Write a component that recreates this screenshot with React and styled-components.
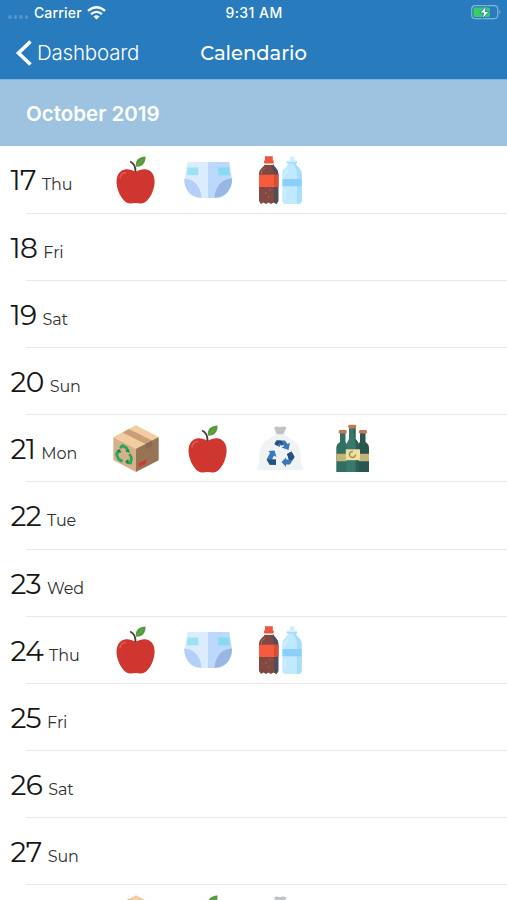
import styled, { createGlobalStyle } from "styled-components";

const days = [
  { number: 17, name: "Thu", icons: ["organic", "diapers", "plastic"] },
  { number: 18, name: "Fri", icons: [] },
  { number: 19, name: "Sat", icons: [] },
  { number: 20, name: "Sun", icons: [] },
  { number: 21, name: "Mon", icons: ["paper", "organic", "residual", "glass"] },
  { number: 22, name: "Tue", icons: [] },
  { number: 23, name: "Wed", icons: [] },
  { number: 24, name: "Thu", icons: ["organic", "diapers", "plastic"] },
  { number: 25, name: "Fri", icons: [] },
  { number: 26, name: "Sat", icons: [] },
  { number: 27, name: "Sun", icons: [] },
  { number: 28, name: "Mon", icons: ["paper", "organic", "residual"] },
];

const Apple = () => (
  <Icon viewBox="0.400 0 48 48">
    <path d="M24 16C19 13 14 12.200 10 14.800C3.500 19 4 29 7.500 37C10 43 15 48 19 47.500C22 46.800 26 46.800 29 47.500C33 48 38 43 40.500 37C44 29 44.500 19 38 14.800C34 12.200 29 13 24 16Z" fill="#d03630" />
    <path d="M8.500 22C9 18.500 11 16.800 14 16.500" fill="none" stroke="#e0584e" strokeWidth="1.600" strokeLinecap="round" />
    <path d="M18.500 5.500C22 7 24 11 24 16" fill="none" stroke="#493b3a" strokeWidth="1.900" />
    <path d="M24.500 10.800C23 4 28 0.500 34 0.500C34 7 31 11 24.500 10.800Z" fill="#579a3b" />
    <path d="M25 10L31 3.500" stroke="#79b657" strokeWidth="0.700" />
  </Icon>
);

const Diaper = () => (
  <Icon viewBox="0 0 48 48">
    <path d="M3.500 6H24V42H16C7 42 0.300 34 0.300 24Z" fill="#dcecff" />
    <path d="M24 6H45.300L48 24C48 34 41 42 32 42H24Z" fill="#bcd8fb" />
    <path d="M0.300 22.500C10 22.500 17 31 17.500 41.700C7 41.500 0 33.500 0.300 22.500Z" fill="#b4cff8" />
    <path d="M48 22.500C38 22.500 31 31 30.500 41.700C41 41.500 48.300 33.500 48 22.500Z" fill="#98b7e3" />
    <path d="M3.500 11.500H14.300V19.300H2.800Z" fill="#9be3f2" />
    <path d="M34.300 11.500H45L45.700 19.300H34.300Z" fill="#85dbf0" />
  </Icon>
);

const PlasticBottles = () => (
  <Icon viewBox="0 0 48 48">
    <path d="M9 7H17C17 11 22.300 12 22.300 18V45L20.500 48L17.500 46.500L15 48L12.500 46.500L10 48L7.500 46.500L5 48L3 45V18C3 12 9 11 9 7Z" fill="#824942" />
    <path d="M17 7C17 11 22.300 12 22.300 18V45L20.500 48L18 46V18C18 12 14.500 10 14.500 7Z" fill="#504c59" />
    <path d="M3 18.700H22.300V31H3Z" fill="#f65b3d" />
    <path d="M18 18.700H22.300V31H18Z" fill="#d84b35" />
    <path d="M9 0.300H16.800V4.500H17.700V7H8V4.500H9Z" fill="#ef573c" />
    <path d="M8.500 7.300H17.200V9H8.500Z" fill="#f6e0d6" />
    <path d="M5.500 18V16C5.500 14 8 13 9 12M9 37H11M13 34H14.500M12 41H13.500" fill="none" stroke="#a56e62" strokeWidth="1" />
    <path d="M32 7H40C40 11 45.700 12 45.700 18V22L44.700 23V30L45.700 31.500V44Q45.700 48 42 48H30Q26.300 48 26.300 44V31.500L27.300 30V23L26.300 22V18C26.300 12 32 11 32 7Z" fill="#c0e9ff" />
    <path d="M40 7C40 11 45.700 12 45.700 18V44Q45.700 48 42 48H41V18C41 12 37.500 10 37.500 7Z" fill="#a6ddfb" />
    <path d="M26.300 23H45.700V30.300H26.300Z" fill="#8bd0fb" />
    <path d="M34 0.500H38.500V4.500H41V7H30.500V4.500H34Z" fill="#cfeeff" />
    <path d="M30.500 6.700H41" stroke="#9bd8fa" strokeWidth="1" />
    <path d="M29 20V17L32 14M29 33V43" fill="none" stroke="#d8f2ff" strokeWidth="1.200" />
  </Icon>
);

const CardboardBox = () => (
  <Icon viewBox="0 0 48 48">
    <path d="M24 0.300L46.700 12L24 23.700L1.300 12.300Z" fill="#f3cda0" />
    <path d="M17 3.900L40 15.500L33.500 19L10.500 7.500Z" fill="#c99f78" />
    <path d="M1.300 12.300L24 23.700V47L1.300 35Z" fill="#d6b08a" />
    <path d="M24 23.700L46.700 12V35.300L24 47Z" fill="#987457" />
    <path d="M33.500 19L40 15.500V21L33.500 24.500Z" fill="#8b6a51" />
    <g fill="none" stroke="#26a85a" strokeWidth="2.700">
      <path d="M8 23L10.500 20.500L14.500 23L16 27" />
      <path d="M7.500 25.500L4.500 29L6.500 34L10.500 36.500" />
      <path d="M17.500 29L19.500 33L18.500 38L14 37" />
    </g>
    <path d="M13.500 26L18 28L16.500 24ZM4 26L8 24L9 28ZM16.500 34L13 36.500L16.500 39.500Z" fill="#15884a" />
    <path d="M27 38L31 36V40L27 42ZM31.500 35.500L35 34L33.500 39L30 40.500Z" fill="#cf3935" />
  </Icon>
);

const TrashBag = () => (
  <Icon viewBox="0 0 48 48">
    <path d="M20 8.500H28C30 12 40 15 43 22C46 29 43 37 47.300 43Q48 45.500 45 45.300H3Q0.500 45.300 1.500 42C5 36 2 29 5 22C8 15 18 12 20 8.500Z" fill="#f0f3f4" />
    <path d="M18 2.500Q21 0.800 24 2.200Q27 0.800 30.500 2.500L27.500 8.700Q24 10 20.500 8.700Z" fill="#c0c3c5" />
    <path d="M20.500 15.500H29L31.500 19L34 17.700L32.500 25L25.500 22.500L28 21L26 18L23.500 22L18.500 19Z" fill="#3b78b7" />
    <path d="M20.500 15.500H25L27.500 19L26 21L23.500 17.500L21.500 21L18.500 19Z" fill="#24517f" />
    <path d="M12.500 26L18.500 25.500L20.500 32L18 30.500L16 34.500H20V39.700H13.500L10.500 34.500L14 28Z" fill="#3b78b7" />
    <path d="M12 34.500H20V39.700H14L11 35Z" fill="#24517f" />
    <path d="M31 29L35.500 26.500L38.500 32L34 39.500H30V42L25.500 37L30 32.500V34.500H33Z" fill="#3b78b7" />
    <path d="M31 29L35.500 26.500L38.500 32L36.500 35H33Z" fill="#24517f" />
  </Icon>
);

const GlassBottles = () => (
  <Icon viewBox="0 0 48 48">
    <path d="M12 8H17.500V17Q20 20 20 23V47H8.300V23Q8.300 19 12 17Z" fill="#306f61" />
    <path d="M32 8H37.500V17Q41 19 41 23V47H29V23Q29 19 32 17Z" fill="#26564f" />
    <path d="M8.300 28.700H41V36.300H8.300Z" fill="#c3b578" />
    <path d="M21 3H27.500V14Q31 17 31 22V47H18.500V22Q18.500 17 21 14Z" fill="#377a6b" />
    <path d="M25 3H27.500V14Q31 17 31 22V47H27.500V20Z" fill="#2a6156" />
    <path d="M17.800 24.300H32V35.200H17.800Z" fill="#f2df9d" />
    <path d="M25 26.500A3 3 0 1 0 27.500 29.500" fill="none" stroke="#9d9161" strokeWidth="1.500" />
    <g fill="#c47757">
      <rect x="10.700" y="5" width="8" height="3.600" rx="1.400" />
      <rect x="20.200" y="-0.300" width="8" height="3.700" rx="1.400" />
      <rect x="31" y="5" width="8" height="3.600" rx="1.400" />
    </g>
  </Icon>
);

const wasteIcons = {
  organic: Apple,
  diapers: Diaper,
  plastic: PlasticBottles,
  paper: CardboardBox,
  residual: TrashBag,
  glass: GlassBottles,
};

const App = () => {
  return (
    <Screen>
      <GlobalStyle />
      <Header>
        <StatusBar>
          <CarrierInfo>
            <Signal>
              <Dot />
              <Dot />
              <Dot />
              <Dot />
            </Signal>
            <span>Carrier</span>
            <svg width="19" height="14" viewBox="0 0 19 14" fill="none" stroke="#fff" strokeWidth="2.300">
              <path d="M1 4.800Q9.500 -2.200 18 4.800" />
              <path d="M4 8.200Q9.500 3.600 15 8.200" />
              <path d="M6.500 10.500Q9.500 8 12.500 10.500L9.500 13.500Z" fill="#fff" stroke="none" />
            </svg>
          </CarrierInfo>
          <Time>9:31 AM</Time>
          <Battery width="31" height="15" viewBox="0 0 31 15">
            <rect x="0.700" y="0.700" width="26" height="13" rx="3.500" fill="none" stroke="#83b3dc" strokeWidth="1.200" />
            <path d="M28.300 5Q30.500 7.200 28.300 9.500Z" fill="#83b3dc" />
            <rect x="2.500" y="2.500" width="16.500" height="9.500" rx="1.500" fill="#39cd65" />
            <path d="M15.500 0.800L8.800 8H12.600L11.200 14L18 6.500H14.200Z" fill="#fff" stroke="#287bbd" strokeWidth="0.900" />
          </Battery>
        </StatusBar>
        <NavBar>
          <BackButton>
            <svg width="17" height="26" viewBox="0 0 17 26">
              <path d="M15.500 1.500L3.500 13L15.500 24.500" fill="none" stroke="#fff" strokeWidth="3.600" />
            </svg>
            <BackLabel>Dashboard</BackLabel>
          </BackButton>
          <Title>Calendario</Title>
        </NavBar>
      </Header>
      <MonthHeader>October 2019</MonthHeader>
      {days.map((day) => (
        <DayRow key={day.number}>
          <DayLabel>
            <DayNumber>{day.number}</DayNumber>
            <DayName>{day.name}</DayName>
          </DayLabel>
          <IconList>
            {day.icons.map((type) => {
              const WasteIcon = wasteIcons[type];
              return <WasteIcon key={type} />;
            })}
          </IconList>
        </DayRow>
      ))}
    </Screen>
  );
};

const GlobalStyle = createGlobalStyle`
  * {
    box-sizing: border-box;
  }

  body {
    margin: 0;
    background: #fff;
    overflow: hidden;
  }
`;

const Screen = styled.div`
  width: 507px;
  height: 900px;
  overflow: hidden;
  background: #fff;
  color: #161616;
  font-family: Montserrat, Inter, sans-serif;
`;

const Header = styled.header`
  height: 79px;
  background: #287bbd;
  color: #fff;
`;

const StatusBar = styled.div`
  height: 26px;
  display: grid;
  grid-template-columns: 1fr auto 1fr;
  align-items: center;
  padding: 0 5px 1px 8px;
  font-family: Inter, sans-serif;
  font-size: 14px;
  font-weight: 500;
`;

const CarrierInfo = styled.div`
  display: flex;
  align-items: center;
  gap: 5.5px;
  letter-spacing: 0.2px;
`;

const Signal = styled.div`
  display: flex;
  gap: 2px;
  padding-top: 9px;
`;

const Dot = styled.span`
  width: 3.6px;
  height: 3.6px;
  border-radius: 50%;
  background: #5294ca;
`;

const Time = styled.span`
  margin-right: 2px;
  letter-spacing: 0.45px;
`;

const Battery = styled.svg`
  justify-self: end;
`;

const NavBar = styled.nav`
  height: 53px;
  display: grid;
  grid-template-columns: 1fr auto 1fr;
  align-items: center;
  padding: 0 0 0 15px;
`;

const BackButton = styled.div`
  display: flex;
  align-items: center;
  gap: 5px;
`;

const BackLabel = styled.span`
  font-family: Inter, sans-serif;
  font-size: 20.5px;
  font-weight: 300;
  letter-spacing: -0.2px;
`;

const Title = styled.h1`
  margin: 0 15px 0 0;
  font-size: 19.5px;
  font-weight: 500;
`;

const MonthHeader = styled.h2`
  height: 67.4px;
  margin: 0;
  padding: 0 26px;
  display: flex;
  align-items: center;
  border-top: 1px solid #7eb2dc;
  background: #9ec3e0;
  color: #fff;
  font-family: Inter, sans-serif;
  font-size: 20.5px;
  font-weight: 600;
`;

const DayRow = styled.div`
  height: 67.2px;
  display: flex;
  align-items: center;
  background: linear-gradient(#e8e8ea, #e8e8ea) 26px 100% / 100% 1px no-repeat;
`;

const DayLabel = styled.div`
  width: 112px;
  padding: 1px 0 0 10.5px;
  display: flex;
  align-items: baseline;
  gap: 6px;
  line-height: 1;
`;

const DayNumber = styled.span`
  font-size: 28px;
  font-weight: 400;
  letter-spacing: -0.6px;
`;

const DayName = styled.span`
  font-size: 16px;
  letter-spacing: -0.1px;
  color: #303030;
`;

const IconList = styled.div`
  display: flex;
  gap: 24px;
`;

const Icon = styled.svg`
  width: 48px;
  height: 48px;
  overflow: visible;
`;

export default App;
